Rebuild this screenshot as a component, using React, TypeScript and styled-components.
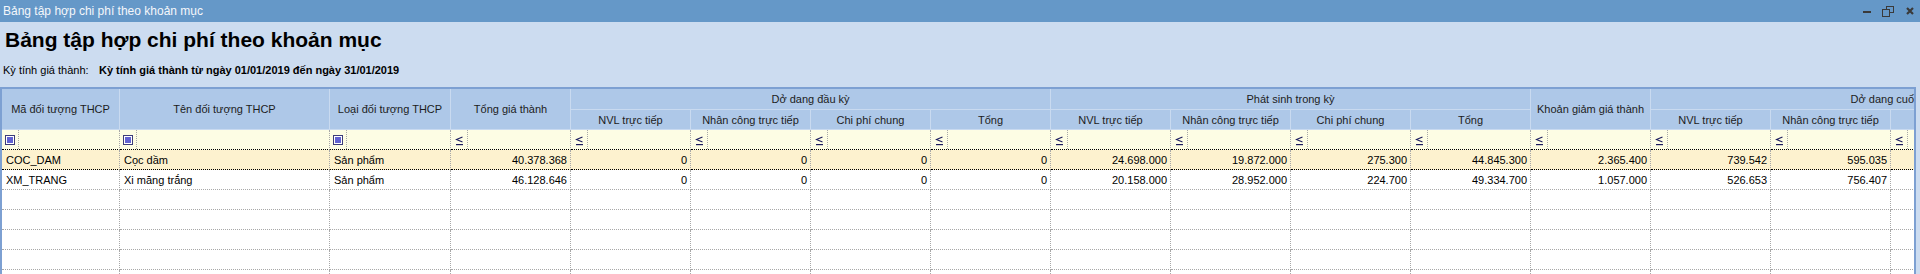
import React from 'react';
import styled, { createGlobalStyle } from 'styled-components';

const GlobalStyle = createGlobalStyle`
  html, body {
    margin: 0;
    padding: 0;
    overflow: hidden;
    background: #ccdcf0;
    font-family: 'Liberation Sans', Arial, sans-serif;
  }
`;

const Window = styled.div`
  width: 1920px;
  height: 274px;
  display: flex;
  flex-direction: column;
`;

const TitleBar = styled.div`
  height: 22px;
  background: #6598c8;
  display: flex;
  align-items: center;
  justify-content: space-between;
  padding: 0 6px 0 3px;
`;

const TitleText = styled.span`
  color: #f4f7fb;
  font-size: 12px;
`;

const WindowButtons = styled.div`
  display: flex;
  align-items: center;
  gap: 11px;
  color: #3a3a3a;
`;

const Heading = styled.h1`
  margin: 6px 0 0 5px;
  font-size: 21px;
  line-height: 24px;
  font-weight: bold;
  color: #000;
`;

const PeriodRow = styled.div`
  margin: 11px 0 0 3px;
  display: flex;
  font-size: 11px;
  line-height: 14px;
  color: #000;
`;

const PeriodLabel = styled.span`
  width: 96px;
`;

const PeriodValue = styled.span`
  font-weight: bold;
`;

const GridFrame = styled.div`
  margin-top: 10px;
  width: 1916px;
  flex: 1;
  box-sizing: border-box;
  border: 2px solid #7da0d2;
  border-bottom: none;
  background: #fff;
  overflow: hidden;
`;

const Table = styled.table`
  table-layout: fixed;
  border-collapse: separate;
  border-spacing: 0;
  width: 2129px;
  font-size: 11px;
  color: #000;
  td, th {
    box-sizing: border-box;
  }
`;

const HeadCell = styled.th<{ $h?: number }>`
  height: ${(p) => (p.$h ? `${p.$h}px` : 'auto')};
  padding: 0 2px;
  background: #aec8e8;
  border-right: 1px solid #c9daf0;
  border-bottom: 1px solid #c9daf0;
  font-weight: normal;
  color: #1c1c1c;
  text-align: center;
  vertical-align: middle;
  white-space: nowrap;
  overflow: hidden;
`;

const FilterCell = styled.td`
  height: 20px;
  padding: 0;
  background: #fdfde4;
  border-right: 1px dotted #a8a8a8;
  border-bottom: 1px dotted #000;
`;

const FilterInner = styled.div`
  display: flex;
  height: 19px;
`;

const FilterIconSlot = styled.div`
  width: 17px;
  box-sizing: border-box;
  border-right: 1px dotted #a8a8a8;
  display: flex;
  align-items: center;
  padding-left: 3px;
`;

const SquareIcon = styled.span`
  width: 10px;
  height: 10px;
  box-sizing: border-box;
  border: 1px solid #3c3c78;
  padding: 1px;
  background: #fff;
  display: block;
  &::after {
    content: '';
    display: block;
    width: 100%;
    height: 100%;
    background: #6262d2;
  }
`;

const LessEqIcon = () => (
  <svg width="9" height="10" viewBox="0 0 9 10" style={{ marginLeft: 1, marginTop: 2 }}>
    <path d="M7.5 1 L1.5 3.5 L7.5 6" fill="none" stroke="#1a1a5c" strokeWidth="1.1" />
    <rect x="1" y="8" width="7" height="1.2" fill="#1a1a5c" />
  </svg>
);

const BodyRow = styled.tr<{ $focused?: boolean }>`
  td {
    background: ${(p) => (p.$focused ? '#fdf2cf' : '#fff')};
    border-bottom: 1px dotted ${(p) => (p.$focused ? '#000' : '#a8a8a8')};
  }
`;

const Cell = styled.td<{ $num?: boolean }>`
  height: 20px;
  padding: ${(p) => (p.$num ? '0 3px 0 2px' : '0 2px 0 4px')};
  border-right: 1px dotted #a8a8a8;
  text-align: ${(p) => (p.$num ? 'right' : 'left')};
  white-space: nowrap;
  overflow: hidden;
  vertical-align: middle;
`;

const widths = [118, 210, 121, 120, ...Array(13).fill(120)];
const subCols = ['NVL trực tiếp', 'Nhân công trực tiếp', 'Chi phí chung', 'Tổng'];
const textCols = 3;

const rows = [
  ['COC_DAM', 'Cọc dầm', 'Sản phẩm', '40.378.368', '0', '0', '0', '0', '24.698.000', '19.872.000', '275.300', '44.845.300', '2.365.400', '739.542', '595.035', '766.955', '2.101.532'],
  ['XM_TRANG', 'Xi măng trắng', 'Sản phẩm', '46.128.646', '0', '0', '0', '0', '20.158.000', '28.952.000', '224.700', '49.334.700', '1.057.000', '526.653', '756.407', '865.994', '2.149.054'],
];

function App(): JSX.Element {
  return (
    <Window>
      <GlobalStyle />
      <TitleBar>
        <TitleText>Bảng tập hợp chi phí theo khoản mục</TitleText>
        <WindowButtons>
          <svg width="8" height="8" viewBox="0 0 8 8">
            <rect x="0" y="4" width="8" height="2" fill="currentColor" />
          </svg>
          <svg width="12" height="11" viewBox="0 0 12 11">
            <rect x="4.5" y="0.5" width="7" height="6" fill="none" stroke="currentColor" />
            <rect x="0.5" y="3.5" width="7" height="7" fill="#6598c8" stroke="currentColor" />
          </svg>
          <svg width="8" height="8" viewBox="0 0 8 8" style={{ marginLeft: 1 }}>
            <path d="M1 1 L7 7 M7 1 L1 7" stroke="currentColor" strokeWidth="2.2" />
          </svg>
        </WindowButtons>
      </TitleBar>
      <Heading>Bảng tập hợp chi phí theo khoản mục</Heading>
      <PeriodRow>
        <PeriodLabel>Kỳ tính giá thành:</PeriodLabel>
        <PeriodValue>Kỳ tính giá thành từ ngày 01/01/2019 đến ngày 31/01/2019</PeriodValue>
      </PeriodRow>
      <GridFrame>
        <Table>
          <colgroup>
            {widths.map((w, i) => (
              <col key={i} style={{ width: w }} />
            ))}
          </colgroup>
          <thead>
            <tr>
              <HeadCell rowSpan={2}>Mã đối tượng THCP</HeadCell>
              <HeadCell rowSpan={2}>Tên đối tượng THCP</HeadCell>
              <HeadCell rowSpan={2}>Loại đối tượng THCP</HeadCell>
              <HeadCell rowSpan={2}>Tổng giá thành</HeadCell>
              <HeadCell colSpan={4} $h={21}>Dở dang đầu kỳ</HeadCell>
              <HeadCell colSpan={4} $h={21}>Phát sinh trong kỳ</HeadCell>
              <HeadCell rowSpan={2}>Khoản giảm giá thành</HeadCell>
              <HeadCell colSpan={4} $h={21}>Dở dang cuối kỳ</HeadCell>
            </tr>
            <tr>
              {[0, 1, 2].map((g) =>
                subCols.map((s) => (
                  <HeadCell key={g + s} $h={20}>
                    {s}
                  </HeadCell>
                )),
              )}
            </tr>
          </thead>
          <tbody>
            <tr>
              {widths.map((_, i) => (
                <FilterCell key={i}>
                  <FilterInner>
                    <FilterIconSlot>{i < textCols ? <SquareIcon /> : <LessEqIcon />}</FilterIconSlot>
                  </FilterInner>
                </FilterCell>
              ))}
            </tr>
            {rows.map((r, ri) => (
              <BodyRow key={ri} $focused={ri === 0}>
                {r.map((v, ci) => (
                  <Cell key={ci} $num={ci >= textCols}>
                    {v}
                  </Cell>
                ))}
              </BodyRow>
            ))}
            {[0, 1, 2, 3, 4].map((e) => (
              <BodyRow key={'e' + e}>
                {widths.map((_, ci) => (
                  <Cell key={ci} />
                ))}
              </BodyRow>
            ))}
          </tbody>
        </Table>
      </GridFrame>
    </Window>
  );
}

export default App;
